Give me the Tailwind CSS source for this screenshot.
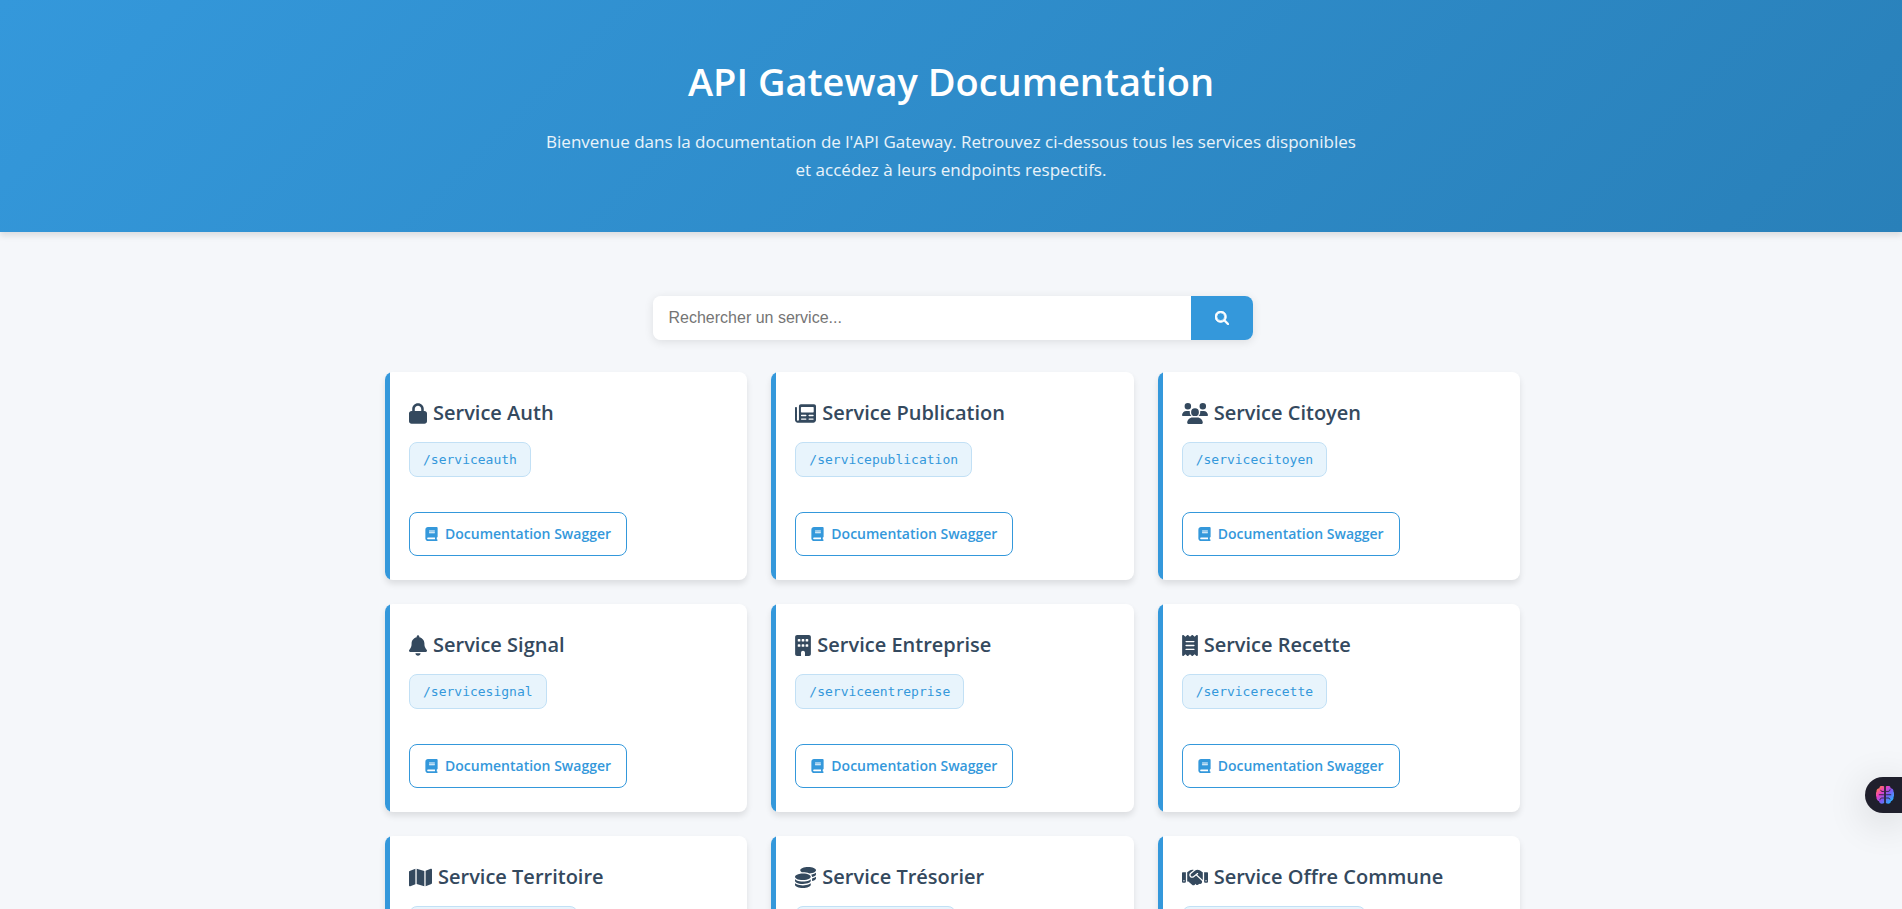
<!DOCTYPE html>
<html lang="fr">
<head>
<meta charset="utf-8">
<meta name="viewport" content="width=device-width, initial-scale=1">
<title>API Gateway Documentation</title>
<script src="https://cdn.jsdelivr.net/npm/@tailwindcss/browser@4"></script>
</head>
<body class="min-h-screen overflow-x-hidden bg-[#f5f7fa] font-['Open_Sans','Noto_Sans',sans-serif] text-[#34495e]">
<svg class="hidden" aria-hidden="true">
  <symbol id="lock" viewBox="0 0 448 512"><path d="M144 144v48H304V144c0-44.200-35.800-80-80-80s-80 35.800-80 80zM80 192V144C80 64.500 144.500 0 224 0s144 64.500 144 144v48h16c35.300 0 64 28.700 64 64V448c0 35.300-28.700 64-64 64H64c-35.300 0-64-28.700-64-64V256c0-35.300 28.700-64 64-64H80z"/></symbol>
  <symbol id="newspaper" viewBox="0 0 512 512"><path fill-rule="evenodd" d="M96 80c0-26.500 21.500-48 48-48H464c26.500 0 48 21.500 48 48V416c0 35.300-28.700 64-64 64H64c-35.300 0-64-28.700-64-64V120c0-13.300 10.700-24 24-24s24 10.700 24 24V416c0 8.800 7.200 16 16 16s32-7.200 32-16V80zM144 112v104c0 9 7 16 16 16H440c9 0 16-7 16-16V112c0-9-7-16-16-16H160c-9 0-16 7-16 16zM160 288c-9 0-16 7-16 16s7 16 16 16H264c9 0 16-7 16-16s-7-16-16-16zM344 288c-9 0-16 7-16 16s7 16 16 16H440c9 0 16-7 16-16s-7-16-16-16zM160 376c-9 0-16 7-16 16s7 16 16 16H264c9 0 16-7 16-16s-7-16-16-16zM344 376c-9 0-16 7-16 16s7 16 16 16H440c9 0 16-7 16-16s-7-16-16-16z"/></symbol>
  <symbol id="users" viewBox="0 0 640 512"><path d="M144 0a80 80 0 1 1 0 160A80 80 0 1 1 144 0zM512 0a80 80 0 1 1 0 160A80 80 0 1 1 512 0zM0 298.700C0 239.800 47.800 192 106.700 192h42.700c15.900 0 31 3.500 44.600 9.700c-1.300 7.200-1.900 14.700-1.900 22.300c0 38.200 16.800 72.500 43.300 96H21.300C9.600 320 0 310.400 0 298.700zM404.600 320c26.600-23.500 43.300-57.800 43.300-96c0-7.600-.7-15-1.900-22.300c13.600-6.300 28.700-9.700 44.600-9.700h42.700C592.200 192 640 239.800 640 298.700c0 11.800-9.600 21.300-21.300 21.300H404.600zM224 224a96 96 0 1 1 192 0 96 96 0 1 1 -192 0zM128 485.300C128 411.700 187.700 352 261.300 352H378.700C452.300 352 512 411.700 512 485.300c0 14.700-11.900 26.700-26.700 26.700H154.700c-14.700 0-26.700-11.900-26.700-26.700z"/></symbol>
  <symbol id="bell" viewBox="0 0 448 512"><path d="M224 0c-17.700 0-32 14.300-32 32V51.200C119 66 64 130.600 64 208v18.800c0 47-17.300 92.400-48.500 127.600l-7.400 8.300c-8.400 9.400-10.400 22.900-5.300 34.400S19.400 416 32 416H416c12.600 0 24-7.400 29.200-18.900s3.100-25-5.300-34.400l-7.400-8.300C401.300 319.200 384 273.900 384 226.800V208c0-77.400-55-142-128-156.800V32c0-17.700-14.300-32-32-32zm45.300 493.300c12-12 18.700-28.300 18.700-45.300H160c0 17 6.700 33.300 18.700 45.300s28.300 18.700 45.300 18.700s33.300-6.700 45.300-18.700z"/></symbol>
  <symbol id="building" viewBox="0 0 384 512"><path fill-rule="evenodd" d="M48 0C21.500 0 0 21.500 0 48V464c0 26.500 21.500 48 48 48h96V432c0-26.500 21.500-48 48-48s48 21.500 48 48v80h96c26.500 0 48-21.500 48-48V48c0-26.500-21.500-48-48-48H48zM80 96h32q16 0 16 16v32q0 16-16 16H80q-16 0-16-16v-32q0-16 16-16zM176 96h32q16 0 16 16v32q0 16-16 16h-32q-16 0-16-16v-32q0-16 16-16zM272 96h32q16 0 16 16v32q0 16-16 16h-32q-16 0-16-16v-32q0-16 16-16zM80 224h32q16 0 16 16v32q0 16-16 16H80q-16 0-16-16v-32q0-16 16-16zM176 224h32q16 0 16 16v32q0 16-16 16h-32q-16 0-16-16v-32q0-16 16-16zM272 224h32q16 0 16 16v32q0 16-16 16h-32q-16 0-16-16v-32q0-16 16-16z"/></symbol>
  <symbol id="receipt" viewBox="0 0 384 512"><path fill-rule="evenodd" d="M14 2.200C22.500-1.700 32.500-.3 39.600 5.800L80 40.400 120.400 5.800c9-7.700 22.300-7.700 31.200 0L192 40.400 232.400 5.800c9-7.700 22.200-7.700 31.200 0L304 40.400 344.400 5.800c7.100-6.100 17.100-7.500 25.600-3.600s14 12.400 14 21.800V488c0 9.400-5.500 17.900-14 21.800s-18.500 2.500-25.600-3.600L304 471.600l-40.400 34.600c-9 7.700-22.200 7.700-31.200 0L192 471.600l-40.400 34.600c-9 7.700-22.300 7.700-31.200 0L80 471.600 39.600 506.200c-7.100 6.100-17.100 7.500-25.600 3.600S0 497.400 0 488V24C0 14.600 5.500 6.100 14 2.200zM96 144c-8.800 0-16 7.200-16 16s7.200 16 16 16H288c8.800 0 16-7.200 16-16s-7.200-16-16-16H96zM80 352c0 8.800 7.200 16 16 16H288c8.800 0 16-7.200 16-16s-7.200-16-16-16H96c-8.800 0-16 7.200-16 16zM96 240c-8.800 0-16 7.200-16 16s7.200 16 16 16H288c8.800 0 16-7.200 16-16s-7.200-16-16-16H96z"/></symbol>
  <symbol id="map" viewBox="0 0 576 512"><path d="M384 476.100L192 421.200V35.900L384 90.800V476.100zm32-1.200V88.400L543.100 37.500c15.800-6.300 32.900 5.300 32.900 22.300V394.600c0 9.800-6 18.600-15.100 22.300L416 474.800zM15.100 95.100L160 37.200V423.600L32.900 474.500C17.100 480.800 0 469.200 0 452.200V117.400c0-9.800 6-18.600 15.100-22.300z"/></symbol>
  <symbol id="coins" viewBox="0 0 512 512"><path d="M512 80c0 18-14.300 34.600-38.400 48c-29.100 16.100-72.500 27.500-122.300 30.900c-3.700-1.800-7.400-3.500-11.300-5C300.600 137.400 248.200 128 192 128c-8.300 0-16.400 .2-24.500 .6l-1.100-.6C142.300 114.600 128 98 128 80c0-44.200 86-80 192-80S512 35.800 512 80zM160.700 161.100c10.200-.7 20.700-1.100 31.300-1.100c62.200 0 117.400 12.300 152.500 31.400C369.300 204.900 384 221.700 384 240c0 4-.7 7.900-2.100 11.700c-4.600 13.200-17 25.300-35 35.500c-.4 .2-.8 .5-1.300 .7c-35 19.400-90.800 32-153.600 32c-59.600 0-112.900-11.300-148.200-29.100c-1.900-.9-3.700-1.900-5.500-2.900C14.300 274.600 0 258 0 240c0-34.800 53.400-64.500 128-75.400c10.500-1.500 21.400-2.700 32.700-3.500zM416 240c0-21.900-10.600-39.900-24.100-53.400c28.300-4.400 54.200-11.400 76.200-20.500c16.300-6.800 31.500-15.200 43.900-25.500V176c0 19.300-16.500 37.100-43.800 50.900c-14.600 7.400-32.400 13.700-52.400 18.500c.1-1.800 .2-3.500 .2-5.300zm-32 96c0 18-14.300 34.600-38.400 48c-1.800 1-3.600 1.900-5.500 2.900C304.900 404.700 251.600 416 192 416c-62.800 0-118.600-12.600-153.600-32C14.300 370.600 0 354 0 336V300.600c12.500 10.300 27.600 18.700 43.900 25.500C83.400 342.600 135.800 352 192 352s108.600-9.400 148.100-25.900c7.800-3.200 15.300-6.900 22.400-10.900c6.100-3.400 11.800-7.200 17.200-11.200c1.500-1.100 2.900-2.300 4.300-3.400V336zm32 0V278.100c19-4.200 36.500-9.500 52.100-16c16.300-6.800 31.500-15.200 43.900-25.500V272c0 10.500-5 21-14.900 30.900c-16.300 16.300-45 29.700-81.300 38.400c.1-1.700 .2-3.500 .2-5.300zM192 448c56.200 0 108.600-9.400 148.100-25.900c16.300-6.800 31.500-15.200 43.900-25.500V432c0 44.200-86 80-192 80S0 476.200 0 432V396.600c12.500 10.300 27.600 18.700 43.900 25.500C83.400 438.600 135.800 448 192 448z"/></symbol>
  <symbol id="handshake" viewBox="0 0 640 512"><path fill-rule="evenodd" d="M323.400 85.200l-96.800 78.400c-16.100 13-19.200 36.400-7 53.100c12.900 17.800 38 21.300 55.300 7.800l99.300-77.200c7-5.400 17-4.200 22.500 2.800s4.200 17-2.800 22.500l-20.900 16.200L512 316.800V128h-.7l-3.900-2.500L434.800 79c-15.300-9.800-33.200-15-51.400-15c-21.800 0-43 7.500-60 21.200zm22.800 124.400l-51.700 40.200C263 274.300 217.300 268 193.700 235.600c-22.200-30.500-16.600-73.100 12.700-96.800l83.200-67.300c-11.600-4.900-24.100-7.400-36.800-7.400C234 64 215.700 69.600 200 80l-72 48V352h28.200l91.400 83.400c19.600 17.900 49.900 16.500 67.800-3.100c5.500-6.100 9.200-13.200 11.100-20.600l17 15.600c19.500 17.900 49.900 16.600 67.800-2.900c4.500-4.900 7.800-10.600 9.900-16.500c19.400 13 45.800 10.300 62.100-7.500c17.900-19.500 16.600-49.900-2.900-67.800l-134.200-123zM16 128c-8.800 0-16 7.200-16 16V352c0 17.700 14.300 32 32 32H64c17.700 0 32-14.300 32-32V128H16zM48 320a16 16 0 1 1 0 32 16 16 0 1 1 0-32zM544 128V352c0 17.700 14.300 32 32 32h32c17.700 0 32-14.300 32-32V144c0-8.800-7.200-16-16-16H544zm32 208a16 16 0 1 1 32 0 16 16 0 1 1 -32 0z"/></symbol>
  <symbol id="book" viewBox="0 0 448 512"><path fill-rule="evenodd" d="M96 0C43 0 0 43 0 96V416c0 53 43 96 96 96H416c17.700 0 32-14.300 32-32s-14.300-32-32-32V384c17.700 0 32-14.300 32-32V32c0-17.700-14.300-32-32-32H96zm0 384H352v64H96c-17.700 0-32-14.300-32-32s14.300-32 32-32zm32-240c0-8.800 7.200-16 16-16H336c8.800 0 16 7.200 16 16s-7.200 16-16 16H144c-8.800 0-16-7.200-16-16zm16 48H336c8.800 0 16 7.200 16 16s-7.200 16-16 16H144c-8.800 0-16-7.200-16-16s7.200-16 16-16z"/></symbol>
  <symbol id="search" viewBox="0 0 512 512"><path d="M416 208c0 45.900-14.900 88.300-40 122.700L502.600 457.400c12.500 12.500 12.500 32.800 0 45.300s-32.800 12.500-45.300 0L330.700 376c-34.400 25.200-76.800 40-122.700 40C93.100 416 0 322.900 0 208S93.100 0 208 0S416 93.100 416 208zM208 352a144 144 0 1 0 0-288 144 144 0 1 0 0 288z"/></symbol>
</svg>

<header class="bg-linear-135 from-[#3498db] to-[#2980b9] px-4 py-12 text-center text-white shadow-[0_4px_6px_rgba(0,0,0,0.1)]">
  <h1 class="text-[38px] leading-[66px] font-semibold">API Gateway Documentation</h1>
  <p class="mx-auto mt-[14px] max-w-[840px] text-[17px] leading-7 text-white/90">Bienvenue dans la documentation de l'API Gateway. Retrouvez ci-dessous tous les services disponibles<br>et accédez à leurs endpoints respectifs.</p>
</header>

<main class="mx-auto flex max-w-[1202px] flex-col gap-8 pt-16 pr-8 pb-16 pl-[35px]">
  <form class="mx-auto flex h-11 w-full max-w-[600px] overflow-hidden rounded-lg shadow-[0_2px_10px_rgba(0,0,0,0.1)]" onsubmit="return false">
    <input type="text" aria-label="Rechercher un service" placeholder="Rechercher un service..." class="min-w-0 grow bg-white px-4 font-['Liberation_Sans',Arial,sans-serif] text-base outline-none placeholder:text-[#757575]">
    <button type="submit" aria-label="Rechercher" class="flex w-[62px] items-center justify-center bg-[#3498db] text-white"><svg class="size-[14px] overflow-visible fill-current stroke-current stroke-[28]"><use href="#search"/></svg></button>
  </form>
  <div id="services" class="grid grid-cols-1 gap-6 md:grid-cols-2 lg:grid-cols-3"></div>
</main>

<template id="card">
  <article class="flex h-52 overflow-hidden rounded-lg bg-white shadow-[0_4px_6px_rgba(0,0,0,0.1)]">
    <span class="w-[5px] shrink-0 bg-[#3498db]"></span>
    <div class="flex grow flex-col items-start py-6 pr-6 pl-[19px]">
      <h2 class="flex items-center gap-[6px] text-[20px] leading-[34px] font-semibold"><svg class="h-[21px] fill-current"><use/></svg><span></span></h2>
      <code class="mt-3 flex h-[35px] items-center rounded-lg border border-[#c2e0f5] bg-[#e8f4fc] px-[13px] font-['DejaVu_Sans_Mono',monospace] text-[13px] text-[#3498db]"></code>
      <a href="#" class="mt-[35px] flex h-11 items-center gap-[7px] rounded-lg border border-[#3498db] px-[15px] text-sm font-semibold text-[#3498db]"><svg class="h-[14px] w-[13px] fill-current"><use href="#book"/></svg><span>Documentation Swagger</span></a>
    </div>
  </article>
</template>

<button type="button" aria-label="Assistant" class="fixed top-[777px] right-0 flex h-9 w-[37px] items-center rounded-l-full bg-[#1f1f2c] pl-[11px] shadow-[0_8px_40px_rgba(0,0,0,0.16)]">
  <svg class="size-[18px]" viewBox="2 2 32 33" preserveAspectRatio="none">
    <defs><linearGradient id="brain" gradientUnits="userSpaceOnUse" x1="4" y1="4" x2="32" y2="30"><stop offset="0" stop-color="#ff8a3c"/><stop offset=".3" stop-color="#ee3fc0"/><stop offset=".6" stop-color="#7c5cf5"/><stop offset="1" stop-color="#22b8ff"/></linearGradient></defs>
    <path fill="url(#brain)" d="M16.500 3v30c-4 3-9 1-9-3C4 29 2 25 3 22 0 19 0 15 3 13 2 9 5 6 8 6c0-4 5-6 8.500-3zM19.500 3v30c4 3 9 1 9-3 3.500-1 5.500-5 4.500-8 3-3 3-7 0-9 1-4-2-7-5-7 0-4-5-6-8.500-3z"/>
    <path fill="none" stroke="#1f1f2c" stroke-width="1.500" d="M16 12h-4l-2-3M7 18h9M16 24h-3c-3 0-4 2-4 4M20 12h3c3 0 4-2 4-4M29 18h-9M20 24h5l2 3"/>
  </svg>
</button>

<script>
  // name, endpoint, icon, icon width for a 21px height
  const services = [
    ["Service Auth", "/serviceauth", "lock", 18],
    ["Service Publication", "/servicepublication", "newspaper", 21],
    ["Service Citoyen", "/servicecitoyen", "users", 26],
    ["Service Signal", "/servicesignal", "bell", 18],
    ["Service Entreprise", "/serviceentreprise", "building", 16],
    ["Service Recette", "/servicerecette", "receipt", 16],
    ["Service Territoire", "/serviceterritoire", "map", 23],
    ["Service Trésorier", "/servicetresorier", "coins", 21],
    ["Service Offre Commune", "/serviceoffrecommune", "handshake", 26]
  ];
  const grid = document.getElementById("services");
  const card = document.getElementById("card");
  for (const [name, path, icon, width] of services) {
    const node = card.content.cloneNode(true);
    node.querySelector("h2 svg").style.width = width + "px";
    node.querySelector("h2 use").setAttribute("href", "#" + icon);
    node.querySelector("h2 span").textContent = name;
    node.querySelector("code").textContent = path;
    grid.append(node);
  }
</script>
</body>
</html>
